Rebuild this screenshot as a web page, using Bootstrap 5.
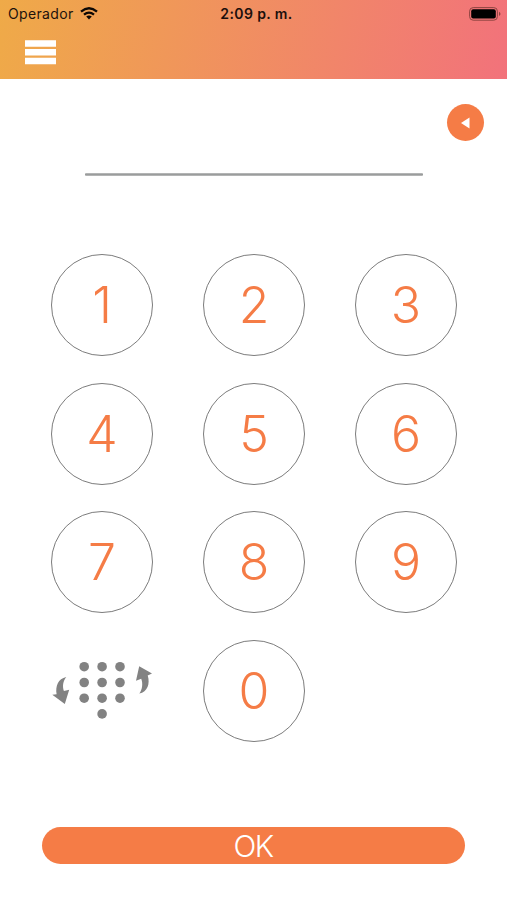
<!DOCTYPE html>
<html lang="es">
<head>
<meta charset="utf-8">
<meta name="viewport" content="width=device-width, initial-scale=1">
<title>Teclado</title>
<link href="https://cdn.jsdelivr.net/npm/bootstrap@5.3.0/dist/css/bootstrap.min.css" rel="stylesheet">
<style>
body{font-family:Inter,"Liberation Sans",sans-serif;width:507px;height:900px;overflow:hidden}
.topbar{height:79px;background:linear-gradient(100deg,#efaa48 0%,#f2727b 100%)}
.status{height:27px;font-size:14px;line-height:27px;color:#1d120c;padding:0 6px 0 8px}
.status>*{flex:1 1 0}
.carrier{letter-spacing:.35px;margin-right:6px}
.clock{font-weight:600;font-size:14px;letter-spacing:.4px;color:#1c0f0c;padding-left:4px}
.menu-btn{margin:13px 0 0 25px;line-height:0}
.back-row{padding:25px 23.5px 0 0}
.back-btn{width:37px;height:37px;background:#f57c46}
.code-line{width:338px;height:3px;margin:32px auto 0 85px;border-radius:1px;background:linear-gradient(#c4c5c5,#9a9c9c 40%,#9a9c9c 60%,#c4c5c5)}
.keypad{display:grid;grid-template-columns:repeat(3,102px);grid-auto-rows:102px;column-gap:50px;row-gap:26.5px;margin:78px 0 0 51px}
.key{border:1.2px solid #7c7c7c;color:#f57c46;font-size:50px;font-weight:300;line-height:1;background:none;padding:0}
.ok-btn{width:423px;height:37px;margin:85.500px 0 0 42px;background:#f57c46;color:#fff;font-size:30px;font-weight:300;line-height:1;letter-spacing:-1.6px}
.ok-btn span{margin-right:1px}
</style>
</head>
<body class="bg-white m-0">
<header class="topbar">
  <div class="status d-flex">
    <div class="d-flex align-items-center"><span class="carrier">Operador</span>
      <svg width="18" height="13" viewBox="0 0 18 13" fill="none" stroke="#0d0805" stroke-width="2.3"><path d="M1 4.6Q9-2.2 17 4.6M4 7.7Q9 3.5 14 7.7"/><path d="M9 12.4 6.2 9.6Q9 7.4 11.8 9.6Z" fill="#0d0805" stroke="none"/></svg>
    </div>
    <div class="clock text-center text-nowrap">2:09 p. m.</div>
    <div class="d-flex justify-content-end align-items-center">
      <svg width="32" height="14" viewBox="0 0 32 14"><rect x=".6" y=".6" width="27.8" height="12.6" rx="3.6" fill="none" stroke="#8e4541"/><rect x="2.2" y="2.2" width="24.6" height="9.4" rx="2" fill="#000"/><path d="M30 4.8Q33 6.9 30 9Z" fill="#8e4541"/></svg>
    </div>
  </div>
  <div class="menu-btn"><svg width="31" height="25" fill="#fff"><path d="M0 .3H31V6.8H0ZM0 9H31V15.5H0ZM0 17.8H31V24.3H0Z"/></svg></div>
</header>
<main>
  <div class="back-row d-flex justify-content-end">
    <button class="back-btn btn rounded-circle border-0 p-0 d-flex align-items-center justify-content-center" aria-label="Borrar"><svg width="9" height="12" viewBox="0 0 9 12"><path d="M0 6 8.5.5V11.5Z" fill="#fff"/></svg></button>
  </div>
  <div class="code-line"></div>
  <div class="keypad">
    <button class="key rounded-circle">1</button><button class="key rounded-circle">2</button><button class="key rounded-circle">3</button>
    <button class="key rounded-circle">4</button><button class="key rounded-circle">5</button><button class="key rounded-circle">6</button>
    <button class="key rounded-circle">7</button><button class="key rounded-circle">8</button><button class="key rounded-circle">9</button>
    <svg width="102" height="102" viewBox="51 639.8 102 102" fill="#828282">
      <g><circle cx="84.2" cy="666.5" r="4.8"/><circle cx="102.1" cy="666.5" r="4.8"/><circle cx="120" cy="666.5" r="4.8"/><circle cx="84.2" cy="682.3" r="4.8"/><circle cx="102.1" cy="682.3" r="4.8"/><circle cx="120" cy="682.3" r="4.8"/><circle cx="84.2" cy="698" r="4.8"/><circle cx="102.1" cy="698" r="4.8"/><circle cx="120" cy="698" r="4.8"/><circle cx="102.1" cy="713.7" r="4.8"/></g>
      <path d="M66.300 676.800C58 678.500 55.300 686 56.600 694L52.300 694.600 64.800 703.700 69.200 689.500 63.900 690.900C62.200 686 63 681 66.300 676.800Z"/>
      <path d="M139.200 666 152 673.400 147.700 675.300C150.300 683.500 147.500 691.800 139.300 693.400C142.500 689 143 683 141.200 678.500L136 680.500Z"/>
    </svg>
    <button class="key rounded-circle">0</button>
  </div>
  <button class="ok-btn btn rounded-pill border-0 p-0 d-block"><span>OK</span></button>
</main>
<script src="https://cdn.jsdelivr.net/npm/bootstrap@5.3.0/dist/js/bootstrap.bundle.min.js"></script>
</body>
</html>
